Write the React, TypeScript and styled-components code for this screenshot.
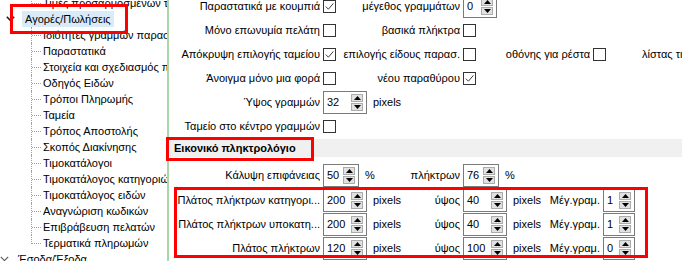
import React from 'react';
import styled, { createGlobalStyle } from 'styled-components';

const GlobalStyle = createGlobalStyle`
  html, body {
    margin: 0;
    padding: 0;
    background: #fff;
  }
  body {
    font-family: "Liberation Sans", Arial, sans-serif;
    font-size: 11px;
    color: #000;
  }
  * {
    box-sizing: border-box;
  }
`;

const Window = styled.div`
  display: flex;
  width: 682px;
  height: 261px;
  overflow: hidden;
  background: #fff;
`;

// ---- tree ----

const TreePane = styled.div`
  flex: none;
  width: 169px;
  overflow: hidden;
  border-right: 2px solid #a9d7a9;
`;

const TreeList = styled.div`
  position: relative;
  margin-top: -5px;
`;

const GroupRow = styled.div<{ $indent: number }>`
  position: relative;
  display: flex;
  align-items: center;
  height: 16px;
  padding-left: ${(p) => p.$indent}px;
  white-space: nowrap;
`;

const GroupLabel = styled.span<{ $selected?: boolean; $gap: number }>`
  margin-left: ${(p) => p.$gap}px;
  padding: 0 3px;
  line-height: 16px;
  background: ${(p) => (p.$selected ? '#d9ebf9' : 'transparent')};
`;

const ChildRow = styled.div<{ $last?: boolean }>`
  position: relative;
  height: 16px;
  line-height: 16px;
  padding-left: 43px;
  white-space: nowrap;

  &::before {
    content: '';
    position: absolute;
    left: 32px;
    top: 8px;
    width: 9px;
    border-top: 1px dotted #a0a0a0;
  }

  &::after {
    content: '';
    position: absolute;
    left: 31px;
    top: 0;
    height: ${(p) => (p.$last ? 9 : 16)}px;
    border-left: 1px dotted #a0a0a0;
  }
`;

const Mark = styled.div<{ $l: number; $t: number; $w: number; $h: number }>`
  position: absolute;
  left: ${(p) => p.$l}px;
  top: ${(p) => p.$t}px;
  width: ${(p) => p.$w}px;
  height: ${(p) => p.$h}px;
  border: 3px solid #ff0000;
  z-index: 5;
  pointer-events: none;
`;

const Chevron = ({ dark }: { dark?: boolean }) => (
  <svg width="9" height="6" viewBox="0 0 9 6">
    <path
      d="M0.8 0.8 L4.5 4.6 L8.2 0.8"
      fill="none"
      stroke={dark ? '#222' : '#555'}
      strokeWidth={dark ? 1.6 : 1.1}
    />
  </svg>
);

// ---- settings panel ----

const Panel = styled.div`
  flex: 1;
  min-width: 0;
  position: relative;
`;

const Form = styled.div`
  margin-top: -6px;
`;

const FieldGrid = styled.div<{ $cols: string }>`
  display: grid;
  grid-template-columns: ${(p) => p.$cols};
  grid-auto-rows: 24px;
  column-gap: 3px;
  align-items: center;
`;

const LabelCell = styled.div`
  text-align: right;
  white-space: nowrap;
  overflow: hidden;
`;

const Cell = styled.div`
  display: flex;
  align-items: center;
  justify-content: space-between;
  white-space: nowrap;
  min-width: 0;
`;

const Pair = styled.div`
  display: flex;
  align-items: center;
  gap: 6px;
`;

const FarLabel = styled.span`
  margin-left: 36px;
  white-space: nowrap;
`;

const SectionHeader = styled.div`
  position: relative;
  margin-top: 1px;
  height: 18px;
  line-height: 18px;
  padding-left: 5px;
  background: #f0f0f0;
  font-weight: bold;
`;

const Spacer = styled.div<{ $h: number }>`
  height: ${(p) => p.$h}px;
`;

const GroupBox = styled.div`
  position: relative;
`;

const Box = styled.div`
  width: 13px;
  height: 13px;
  border: 1px solid #333;
  background: #fff;
  flex: none;
  display: flex;
`;

const Check = ({ on }: { on?: boolean }) => (
  <Box>
    {on && (
      <svg width="11" height="11" viewBox="0 0 11 11">
        <path d="M1.8 5.6 L4.4 8.2 L9.4 2.4" fill="none" stroke="#3a3a3a" strokeWidth="1" />
      </svg>
    )}
  </Box>
);

const SpinField = styled.div<{ $w: number }>`
  width: ${(p) => p.$w}px;
  height: 23px;
  flex: none;
  border: 1px solid #7a7a7a;
  background: #fff;
  display: flex;
  align-items: center;
  justify-content: space-between;
  padding: 0 3px 0 3px;
`;

const SpinButtons = styled.div`
  display: flex;
  flex-direction: column;
  gap: 1px;
`;

const SpinBtn = styled.div`
  width: 12px;
  height: 8px;
  background: #e1e1e1;
  border: 1px solid #acacac;
  display: flex;
  align-items: center;
  justify-content: center;
`;

const SpinBox = ({ value, width }: { value: string; width: number }) => (
  <SpinField $w={width}>
    <span>{value}</span>
    <SpinButtons>
      <SpinBtn>
        <svg width="7" height="4" viewBox="0 0 7 4">
          <polygon points="3.5,0 7,4 0,4" fill="#000" />
        </svg>
      </SpinBtn>
      <SpinBtn>
        <svg width="7" height="4" viewBox="0 0 7 4">
          <polygon points="0,0 7,0 3.5,4" fill="#000" />
        </svg>
      </SpinBtn>
    </SpinButtons>
  </SpinField>
);

const treeItems = [
  'Ιδιότητες γραμμών παραστατικών',
  'Παραστατικά',
  'Στοιχεία και σχεδιασμός παραστατικών',
  'Οδηγός Ειδών',
  'Τρόποι Πληρωμής',
  'Ταμεία',
  'Τρόπος Αποστολής',
  'Σκοπός Διακίνησης',
  'Τιμοκατάλογοι',
  'Τιμοκατάλογος κατηγοριών',
  'Τιμοκατάλογος ειδών',
  'Αναγνώριση κωδικών',
  'Επιβράβευση πελατών',
  'Τερματικά πληρωμών',
];

const keyRows = [
  { label: 'Πλάτος πλήκτρων κατηγορι...', width: '200', height: '40', lines: '1' },
  { label: 'Πλάτος πλήκτρων υποκατη...', width: '200', height: '40', lines: '1' },
  { label: 'Πλάτος πλήκτρων', width: '120', height: '100', lines: '0' },
];

const TOP_COLS = '151px 137px 127px auto';
const BOTTOM_COLS = '151px 137px 137px auto';

export default function App() {
  return (
    <>
      <GlobalStyle />
      <Window>
        <TreePane>
          <TreeList>
            <ChildRow $last>Τιμές προσαρμοσμένων τιμών</ChildRow>
            <GroupRow $indent={6}>
              <Chevron dark />
              <GroupLabel $selected $gap={7}>
                Αγορές/Πωλήσεις
              </GroupLabel>
              <Mark $l={10} $t={-7} $w={118} $h={30} />
            </GroupRow>
            {treeItems.map((item, i) => (
              <ChildRow key={item} $last={i === treeItems.length - 1}>
                {item}
              </ChildRow>
            ))}
            <GroupRow $indent={0}>
              <Chevron />
              <GroupLabel $gap={6}>Έσοδα/Έξοδα</GroupLabel>
            </GroupRow>
          </TreeList>
        </TreePane>

        <Panel>
          <Form>
            <FieldGrid $cols={TOP_COLS}>
              <LabelCell>Παραστατικά με κουμπιά</LabelCell>
              <Cell>
                <Check on />
                <span>μέγεθος γραμμάτων</span>
              </Cell>
              <Cell>
                <SpinBox value="0" width={34} />
              </Cell>
              <div />

              <LabelCell>Μόνο επωνυμία πελάτη</LabelCell>
              <Cell>
                <Check />
                <span>βασικά πλήκτρα</span>
              </Cell>
              <Cell>
                <Check />
              </Cell>
              <div />

              <LabelCell>Απόκρυψη επιλογής ταμείου</LabelCell>
              <Cell>
                <Check on />
                <span>επιλογής είδους παρασ.</span>
              </Cell>
              <Cell>
                <Check />
                <span>οθόνης για ρέστα</span>
              </Cell>
              <Cell style={{ justifyContent: 'flex-start' }}>
                <Check />
                <FarLabel>λίστας τιμών</FarLabel>
              </Cell>

              <LabelCell>Άνοιγμα μόνο μια φορά</LabelCell>
              <Cell>
                <Check />
                <span>νέου παραθύρου</span>
              </Cell>
              <Cell>
                <Check on />
              </Cell>
              <div />

              <LabelCell>Ύψος γραμμών</LabelCell>
              <Cell>
                <Pair>
                  <SpinBox value="32" width={44} />
                  <span>pixels</span>
                </Pair>
              </Cell>
              <div />
              <div />

              <LabelCell>Ταμείο στο κέντρο γραμμών</LabelCell>
              <Cell>
                <Check />
              </Cell>
              <div />
              <div />
            </FieldGrid>

            <SectionHeader>
              Εικονικό πληκτρολόγιο
              <Mark $l={-3} $t={-2} $w={148} $h={24} />
            </SectionHeader>

            <Spacer $h={6} />
            <FieldGrid $cols={BOTTOM_COLS}>
              <LabelCell>Κάλυψη επιφάνειας</LabelCell>
              <Cell>
                <Pair>
                  <SpinBox value="50" width={36} />
                  <span>%</span>
                </Pair>
                <span>πλήκτρων</span>
              </Cell>
              <Cell>
                <Pair>
                  <SpinBox value="76" width={36} />
                  <span>%</span>
                </Pair>
              </Cell>
              <div />
            </FieldGrid>

            <Spacer $h={1} />
            <GroupBox>
              <FieldGrid $cols={BOTTOM_COLS}>
                {keyRows.map((r) => (
                  <React.Fragment key={r.label}>
                    <LabelCell>{r.label}</LabelCell>
                    <Cell>
                      <Pair>
                        <SpinBox value={r.width} width={44} />
                        <span>pixels</span>
                      </Pair>
                      <span>ύψος</span>
                    </Cell>
                    <Cell>
                      <Pair>
                        <SpinBox value={r.height} width={44} />
                        <span>pixels</span>
                      </Pair>
                      <span>Μέγ.γραμ.</span>
                    </Cell>
                    <Cell>
                      <SpinBox value={r.lines} width={32} />
                    </Cell>
                  </React.Fragment>
                ))}
              </FieldGrid>
              <Mark $l={5} $t={-1} $w={474} $h={71} />
            </GroupBox>
          </Form>
        </Panel>
      </Window>
    </>
  );
}
